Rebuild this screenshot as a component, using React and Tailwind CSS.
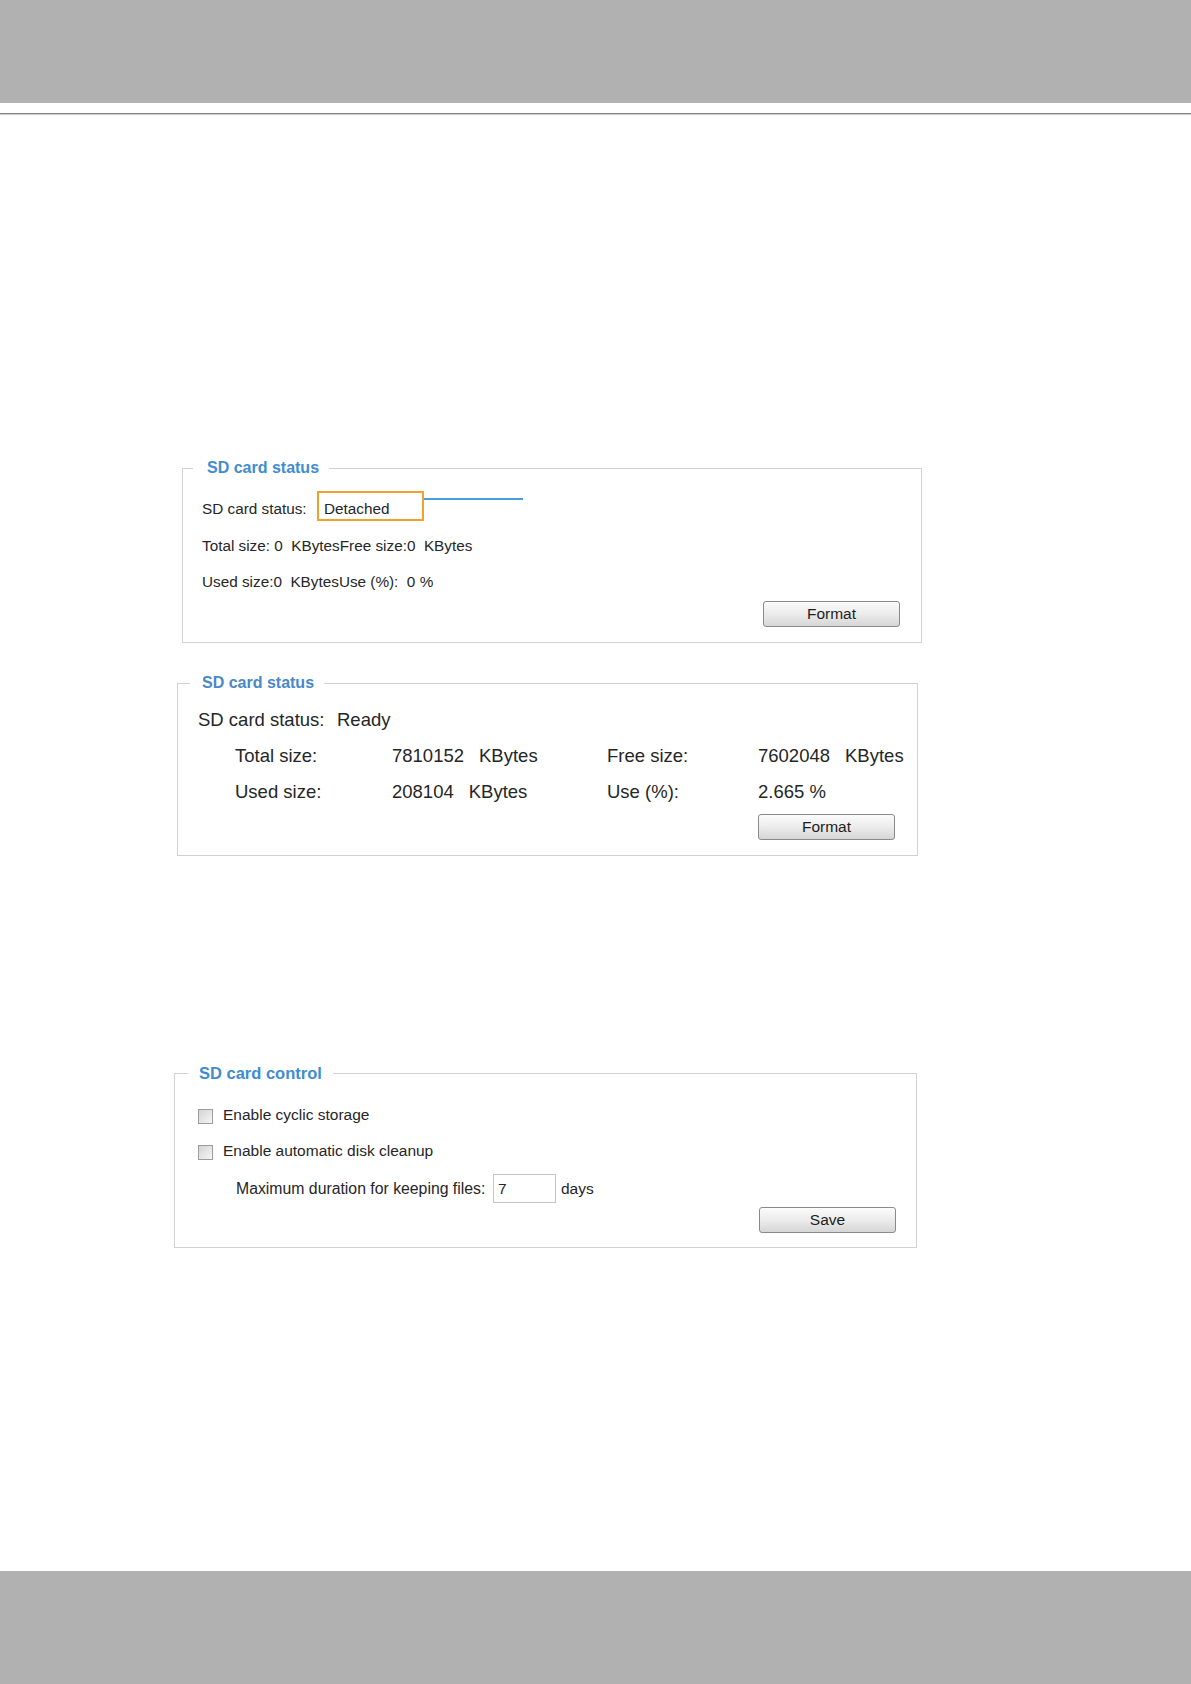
import React from "react";

function Btn({ children, className = "" }) {
  return (
    <div
      className={
        "h-[26px] w-[137px] rounded-[3px] border border-[#8a8a8a] bg-gradient-to-b from-[#fbfbfb] via-[#ececec] to-[#d6d6d6] flex items-center justify-center text-[15.5px] leading-none text-[#1e1e1e] " +
        className
      }
    >
      {children}
    </div>
  );
}

function Check() {
  return (
    <div className="h-[15px] w-[15px] shrink-0 border border-[#9c9c9c] bg-gradient-to-br from-[#d4d4d4] to-[#f6f6f6]" />
  );
}

function Val({ num, unit }) {
  return (
    <span className="flex">
      <span>{num}</span>
      <span className="ml-[15px]">{unit}</span>
    </span>
  );
}

export default function App() {
  return (
    <div className="flex h-[1684px] w-[1191px] flex-col bg-white font-['Liberation_Sans',Arial,sans-serif] text-[#262626]">
      {/* header */}
      <div className="h-[103px] w-full shrink-0 bg-[#b1b1b1]" />
      <div className="h-[10px] shrink-0" />
      <div className="h-[1px] w-full shrink-0 bg-[#858585]" />
      <div className="h-[1px] w-full shrink-0 bg-[#cdcdcd]" />

      <main className="flex flex-1 flex-col">
        {/* Panel 1 */}
        <fieldset className="ml-[182px] mt-[343px] w-[740px] min-w-0 border border-[#d2d2d2]">
          <legend className="ml-[10px] pl-[14px] pr-[10px] text-[16px] font-bold leading-[20px] text-[#3f8dd0]">
            SD card status
          </legend>
          <div className="flex flex-col pl-[19px] pr-[21px] pt-[13px] pb-[15px] text-[15.3px] leading-[20px]">
            <div className="flex items-start">
              <span className="mt-[8px] w-[115px] whitespace-nowrap">SD card status:</span>
              <div className="h-[30px] w-[107px] border-2 border-[#f0a22a] pl-[5px] pt-[6px] leading-[20px] whitespace-nowrap">
                Detached
              </div>
              <div className="mt-[7px] h-[2px] w-[99px] bg-[#4a9fd8]" />
            </div>
            <div className="mt-[15px] whitespace-pre">Total size: 0  KBytesFree size:0  KBytes</div>
            <div className="mt-[16px] whitespace-pre">Used size:0  KBytesUse (%):  0 %</div>
            <div className="mt-[9px] flex justify-end">
              <Btn>Format</Btn>
            </div>
          </div>
        </fieldset>

        {/* Panel 2 */}
        <fieldset className="ml-[177px] mt-[30px] w-[741px] min-w-0 border border-[#d2d2d2]">
          <legend className="ml-[12px] pl-[12px] pr-[10px] text-[16px] font-bold leading-[20px] text-[#4a88c9]">
            SD card status
          </legend>
          <div className="flex flex-col pl-[20px] pr-[22px] pt-[16px] pb-[15px] text-[18.5px] leading-[22px]">
            <div className="flex">
              <span className="w-[139px] whitespace-nowrap">SD card status:</span>
              <span>Ready</span>
            </div>
            <div className="mt-[14px] flex pl-[37px] whitespace-pre">
              <span className="w-[157px] shrink-0">Total size:</span>
              <span className="w-[215px] shrink-0">
                <Val num="7810152" unit="KBytes" />
              </span>
              <span className="w-[151px] shrink-0">Free size:</span>
              <Val num="7602048" unit="KBytes" />
            </div>
            <div className="mt-[14px] flex pl-[37px] whitespace-pre">
              <span className="w-[157px] shrink-0">Used size:</span>
              <span className="w-[215px] shrink-0">
                <Val num="208104" unit="KBytes" />
              </span>
              <span className="w-[151px] shrink-0">Use (%):</span>
              <span>2.665 %</span>
            </div>
            <div className="mt-[11px] flex justify-end">
              <Btn className="w-[136px]">Format</Btn>
            </div>
          </div>
        </fieldset>

        {/* Panel 3 */}
        <fieldset className="ml-[174px] mt-[207px] w-[743px] min-w-0 border border-[#d2d2d2]">
          <legend className="ml-[13px] pl-[11px] pr-[11px] text-[16.5px] font-bold leading-[20px] text-[#3f8dd0]">
            SD card control
          </legend>
          <div className="flex flex-col pl-[23px] pr-[20px] pt-[21px] pb-[14px] text-[15.5px] leading-[22px]">
            <div className="flex items-center">
              <div className="mt-[3px]">
                <Check />
              </div>
              <span className="ml-[10px]">Enable cyclic storage</span>
            </div>
            <div className="mt-[14px] flex items-center">
              <div className="mt-[3px]">
                <Check />
              </div>
              <span className="ml-[10px]">Enable automatic disk cleanup</span>
            </div>
            <div className="mt-[12px] flex items-center pl-[38px]">
              <span className="w-[257px] whitespace-nowrap text-[15.8px]">Maximum duration for keeping files:</span>
              <div className="flex h-[29px] w-[63px] items-center border border-[#c6c6c6] bg-white pl-[4px]">7</div>
              <span className="ml-[5px]">days</span>
            </div>
            <div className="mt-[4px] flex justify-end">
              <Btn>Save</Btn>
            </div>
          </div>
        </fieldset>
      </main>

      {/* footer */}
      <div className="h-[113px] w-full shrink-0 bg-[#b1b1b1]" />
    </div>
  );
}
